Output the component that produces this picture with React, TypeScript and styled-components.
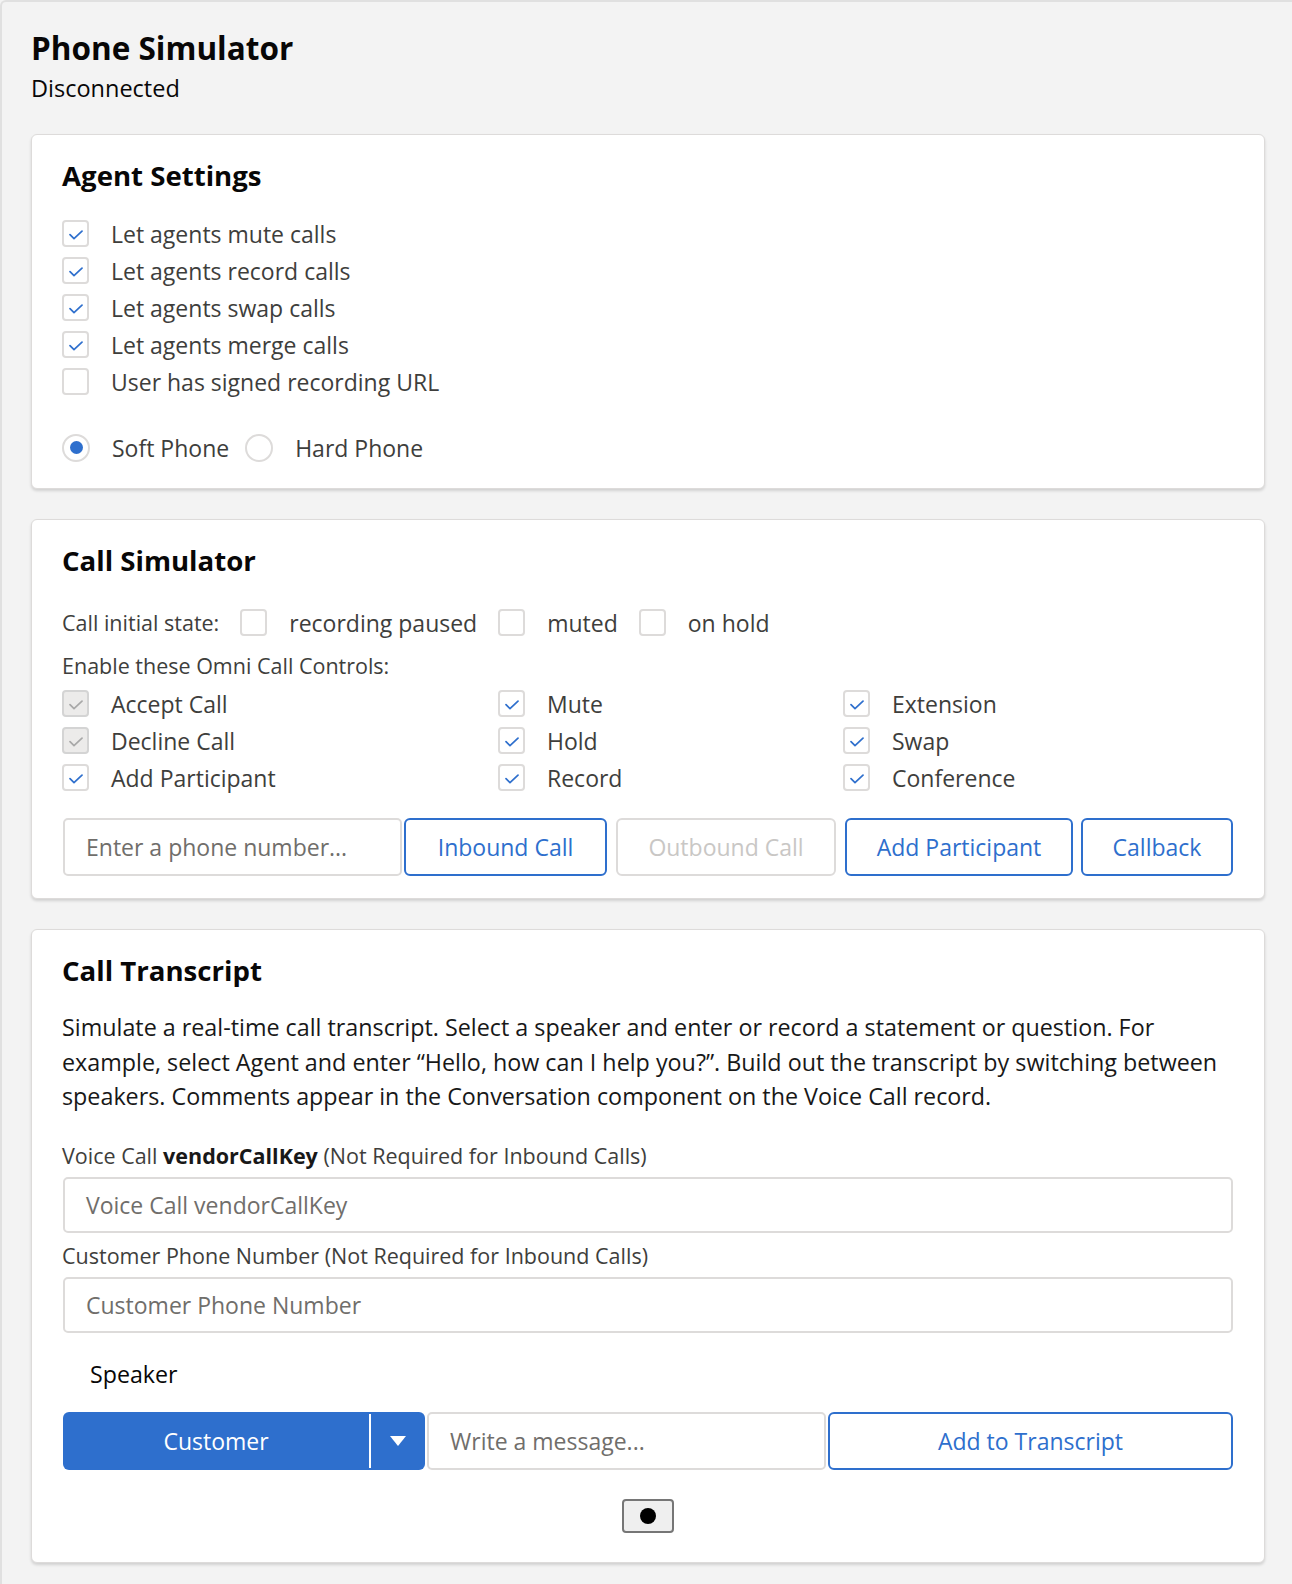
import React from 'react';
import styled, { createGlobalStyle } from 'styled-components';

const Global = createGlobalStyle`
  html, body { margin: 0; padding: 0; background: #f3f3f3; }
  body { font-family: "Open Sans", "Liberation Sans", sans-serif; color: #3e3e3c; }
  * { box-sizing: border-box; }
`;

const BLUE = '#2e6fcd';

const Page = styled.div`
  min-height: 1584px;
  background: #f3f3f3;
  border-top: 2px solid #e0e0e0;
  border-left: 2px solid #e0e0e0;
  border-top-left-radius: 6px;
  padding: 27px 27px 20px 29px;
`;

const PageTitle = styled.h1`
  margin: 0;
  font-size: 31.5px;
  line-height: 38px;
  font-weight: 700;
  color: #080707;
`;

const Status = styled.div`
  margin-top: 6px;
  font-size: 23.5px;
  line-height: 30px;
  color: #080707;
`;

const Card = styled.section<{ $first?: boolean; $pb?: number }>`
  margin-top: ${p => (p.$first ? '31px' : '30px')};
  background: #fff;
  border: 1px solid #dddbda;
  border-radius: 6px;
  box-shadow: 0 2px 3px rgba(0, 0, 0, 0.14);
  padding: 23px 31px ${p => p.$pb ?? 22}px 30px;
  display: flex;
  flex-direction: column;
`;

const CardTitle = styled.h2`
  margin: 0;
  font-size: 27.6px;
  line-height: 34px;
  font-weight: 700;
  color: #080707;
`;

const CheckList = styled.div<{ $mt: number }>`
  margin-top: ${p => p.$mt}px;
  display: flex;
  flex-direction: column;
`;

const Option = styled.label<{ $gap?: number }>`
  display: flex;
  align-items: center;
  gap: ${p => p.$gap ?? 22}px;
  height: 37px;
  font-size: 23px;
  color: #3e3e3c;
  white-space: nowrap;
`;

const Box = styled.span<{ $disabled?: boolean }>`
  flex: none;
  width: 27px;
  height: 27px;
  border: 2px solid ${p => (p.$disabled ? '#d4d4d4' : '#dddbda')};
  border-radius: 4px;
  background: ${p => (p.$disabled ? '#ecebea' : '#fff')};
  display: flex;
  align-items: center;
  justify-content: center;
  padding-top: 3px;
`;

const Circle = styled.span`
  flex: none;
  width: 28px;
  height: 28px;
  border: 2px solid #dddbda;
  border-radius: 50%;
  background: #fff;
  display: flex;
  align-items: center;
  justify-content: center;
`;

const Dot = styled.span`
  width: 13px;
  height: 13px;
  border-radius: 50%;
  background: ${BLUE};
`;

const RadioRow = styled.div`
  margin-top: 29px;
  display: flex;
  align-items: center;
  gap: 16px;
`;

const InlineRow = styled.div`
  margin-top: 27px;
  display: flex;
  align-items: center;
  gap: 21px;
`;

const SmallLabel = styled.span`
  font-size: 21.5px;
  line-height: 28px;
  color: #3e3e3c;
`;

const SectionLabel = styled.div`
  margin-top: 11px;
  font-size: 21.5px;
  line-height: 28px;
  color: #3e3e3c;
`;

const ControlGrid = styled.div`
  margin-top: 5px;
  display: grid;
  grid-template-columns: 436px 345px 1fr;
`;

const ActionRow = styled.div`
  margin-top: 22px;
  margin-left: 1px;
  display: flex;
  align-items: stretch;
  height: 58px;
`;

const TextField = styled.div<{ $w?: number }>`
  ${p => (p.$w ? `width: ${p.$w}px; flex: none;` : 'flex: 1;')}
  height: 100%;
  border: 2px solid #dddbda;
  border-radius: 5px;
  background: #fff;
  display: flex;
  align-items: center;
  padding-left: 21px;
  font-size: 23px;
  color: #706e6b;
  white-space: nowrap;
  overflow: hidden;
`;

const OutlineButton = styled.button<{ $w: number; $ml: number; $disabled?: boolean }>`
  flex: none;
  width: ${p => p.$w}px;
  margin-left: ${p => p.$ml}px;
  height: 100%;
  border: 2px solid ${p => (p.$disabled ? '#dddbda' : BLUE)};
  border-radius: 6px;
  background: #fff;
  color: ${p => (p.$disabled ? '#c9c7c5' : BLUE)};
  font-family: inherit;
  font-size: 23px;
  padding: 0;
  cursor: pointer;
`;

const Paragraph = styled.p`
  margin: 23px 0 0;
  font-size: 23.3px;
  line-height: 34.5px;
  color: #181818;
  white-space: nowrap;
`;

const FieldLabel = styled.div<{ $mt: number }>`
  margin-top: ${p => p.$mt}px;
  font-size: 21.5px;
  line-height: 28px;
  color: #3e3e3c;
  b { font-weight: 700; color: #181818; }
`;

const WideField = styled(TextField)`
  flex: none;
  margin-top: 7px;
  margin-left: 1px;
  height: 56px;
`;

const SpeakerLabel = styled.div`
  margin-top: 26px;
  padding-left: 28px;
  font-size: 23.2px;
  line-height: 30px;
  color: #080707;
`;

const ComposeRow = styled.div`
  margin-top: 23px;
  margin-left: 1px;
  display: flex;
  height: 58px;
`;

const SplitButton = styled.div`
  flex: none;
  width: 362px;
  display: flex;
  align-items: stretch;
  background: ${BLUE};
  border-radius: 6px;
  color: #fff;
  font-size: 23px;
`;

const SplitMain = styled.div`
  flex: 1;
  display: flex;
  align-items: center;
  justify-content: center;
  border-right: 2px solid #fff;
  margin: 2px 0;
`;

const SplitArrow = styled.div`
  width: 54px;
  display: flex;
  align-items: center;
  justify-content: center;
`;

const ComposeField = styled(TextField)`
  margin-left: 2px;
`;

const RecordWrap = styled.div`
  margin-top: 29px;
  display: flex;
  justify-content: center;
  padding-bottom: 7px;
`;

const RecordButton = styled.button`
  width: 52px;
  height: 34px;
  background: #efefef;
  border: 2px solid #767676;
  border-radius: 4px;
  display: flex;
  align-items: center;
  justify-content: center;
  padding: 0;
`;

const RecordDot = styled.span`
  width: 16px;
  height: 16px;
  border-radius: 50%;
  background: #000;
`;

const Check = ({ color }: { color: string }) => (
  <svg width="14" height="10" viewBox="0 0 14 10" aria-hidden>
    <polyline points="1,4.6 5,8.6 13,1.2" fill="none" stroke={color} strokeWidth="1.7" strokeLinecap="round" strokeLinejoin="round" />
  </svg>
);

const Checkbox = ({ checked, disabled }: { checked?: boolean; disabled?: boolean }) => (
  <Box $disabled={disabled}>{checked && <Check color={disabled ? '#a8a8a8' : BLUE} />}</Box>
);

const CheckOption = ({ label, checked, disabled, gap }: { label: string; checked?: boolean; disabled?: boolean; gap?: number }) => (
  <Option $gap={gap}>
    <Checkbox checked={checked} disabled={disabled} />
    {label}
  </Option>
);

export default function App() {
  return (
    <>
      <Global />
      <Page>
        <PageTitle>Phone Simulator</PageTitle>
        <Status>Disconnected</Status>

        <Card $first>
          <CardTitle>Agent Settings</CardTitle>
          <CheckList $mt={23}>
            <CheckOption checked label="Let agents mute calls" />
            <CheckOption checked label="Let agents record calls" />
            <CheckOption checked label="Let agents swap calls" />
            <CheckOption checked label="Let agents merge calls" />
            <CheckOption label="User has signed recording URL" />
          </CheckList>
          <RadioRow>
            <Option>
              <Circle><Dot /></Circle>
              Soft Phone
            </Option>
            <Option $gap={22}>
              <Circle />
              Hard Phone
            </Option>
          </RadioRow>
        </Card>

        <Card>
          <CardTitle>Call Simulator</CardTitle>
          <InlineRow>
            <SmallLabel>Call initial state:</SmallLabel>
            <CheckOption gap={22} label="recording paused" />
            <CheckOption gap={22} label="muted" />
            <CheckOption gap={22} label="on hold" />
          </InlineRow>
          <SectionLabel>Enable these Omni Call Controls:</SectionLabel>
          <ControlGrid>
            <CheckOption checked disabled label="Accept Call" />
            <CheckOption checked label="Mute" />
            <CheckOption checked label="Extension" />
            <CheckOption checked disabled label="Decline Call" />
            <CheckOption checked label="Hold" />
            <CheckOption checked label="Swap" />
            <CheckOption checked label="Add Participant" />
            <CheckOption checked label="Record" />
            <CheckOption checked label="Conference" />
          </ControlGrid>
          <ActionRow>
            <TextField $w={339}>Enter a phone number...</TextField>
            <OutlineButton $w={203} $ml={2}>Inbound Call</OutlineButton>
            <OutlineButton $w={220} $ml={9} $disabled>Outbound Call</OutlineButton>
            <OutlineButton $w={228} $ml={9}>Add Participant</OutlineButton>
            <OutlineButton $w={152} $ml={8}>Callback</OutlineButton>
          </ActionRow>
        </Card>

        <Card $pb={22}>
          <CardTitle>Call Transcript</CardTitle>
          <Paragraph>
            Simulate a real-time call transcript. Select a speaker and enter or record a statement or question. For
            <br />
            example, select Agent and enter “Hello, how can I help you?”. Build out the transcript by switching between
            <br />
            speakers. Comments appear in the Conversation component on the Voice Call record.
          </Paragraph>
          <FieldLabel $mt={28}>
            Voice Call <b>vendorCallKey</b> (Not Required for Inbound Calls)
          </FieldLabel>
          <WideField>Voice Call vendorCallKey</WideField>
          <FieldLabel $mt={9}>Customer Phone Number (Not Required for Inbound Calls)</FieldLabel>
          <WideField>Customer Phone Number</WideField>
          <SpeakerLabel>Speaker</SpeakerLabel>
          <ComposeRow>
            <SplitButton>
              <SplitMain>Customer</SplitMain>
              <SplitArrow>
                <svg width="16" height="10" viewBox="0 0 16 10" aria-hidden>
                  <polygon points="0,0 16,0 8,10" fill="#fff" />
                </svg>
              </SplitArrow>
            </SplitButton>
            <ComposeField>Write a message...</ComposeField>
            <OutlineButton $w={405} $ml={2}>Add to Transcript</OutlineButton>
          </ComposeRow>
          <RecordWrap>
            <RecordButton aria-label="Record">
              <RecordDot />
            </RecordButton>
          </RecordWrap>
        </Card>
      </Page>
    </>
  );
}
